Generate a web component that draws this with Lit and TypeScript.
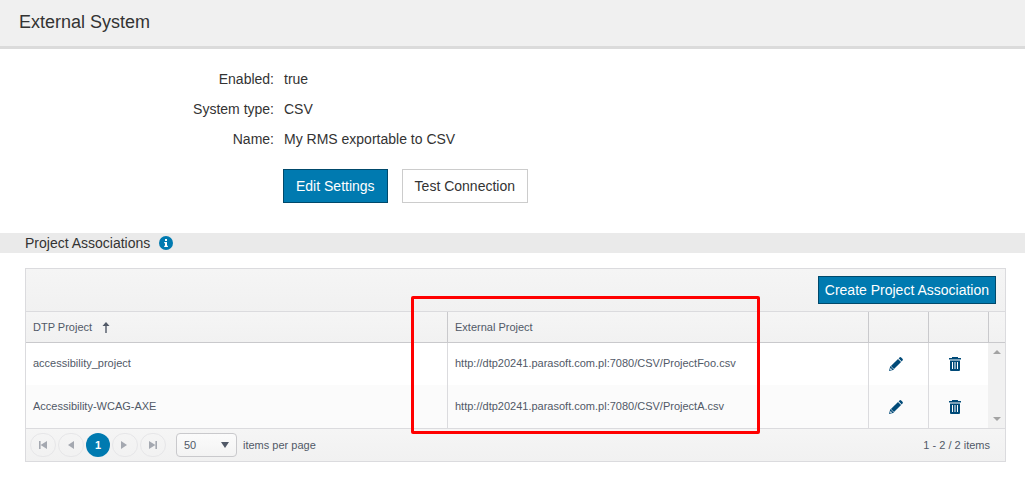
import { LitElement, html, css, svg } from "lit";
import { customElement, state } from "lit/decorators.js";

interface Association {
  project: string;
  external: string;
}

const icon = (cls: string, size: string, body: unknown) => html`
  <svg class=${cls} viewBox=${size} aria-hidden="true">${body}</svg>
`;

const pencil = () => icon("pencil", "0 0 14 14", svg`
  <path d="M9 1.9 12.1 5 5 12.1 1.9 9Z"/>
  <path d="M9.6 1.3 10.5.5Q11.4-.3 12.2.5L13.5 1.8Q14.3 2.6 13.5 3.4L12.7 4.4Z"/>
  <path fill-rule="evenodd" d="M1.3 9 5 12.7 0 14ZM1.6 10.9 1.1 12.5 1.6 12.9 3.1 12.5Z"/>
`);

const trash = () => icon("trash", "0 0 12 14", svg`
  <path d="M3 0H9V1H12V2.4H0V1H3Z"/>
  <path fill-rule="evenodd" d="M1 3.4H11V13Q11 14 10 14H2Q1 14 1 13ZM3 5V12H4V5ZM5.5 5V12H6.5V5ZM8 5V12H9V5Z"/>
`);

const info = () => icon("info", "0 0 14 14", svg`
  <circle cx="7" cy="7" r="7" fill="#007ab0"/>
  <path fill="#fff" d="M6 3H8V5H6ZM5.2 6H8V9.8H8.9V11H5.2V9.8H6V7.2H5.2Z"/>
`);

const arrowUp = () => icon("sort", "0 0 8 11", svg`
  <path d="M4 0 7.5 4H4.7V11H3.3V4H.5Z"/>
`);

const pagerGlyphs: Record<string, string> = {
  first: "M0 0H1.6V8H0ZM8 0V8L1.6 4Z",
  previous: "M7 0V8L1 4Z",
  next: "M0 0V8L6 4Z",
  last: "M8 0H6.4V8H8ZM0 0V8L6.4 4Z",
};

@customElement("app-root")
export class AppRoot extends LitElement {
  @state() private rows: Association[] = [
    { project: "accessibility_project", external: "http://dtp20241.parasoft.com.pl:7080/CSV/ProjectFoo.csv" },
    { project: "Accessibility-WCAG-AXE", external: "http://dtp20241.parasoft.com.pl:7080/CSV/ProjectA.csv" },
  ];

  static styles = css`
    :host {
      display: block;
      font: 14px/20px "Liberation Sans", Arial, sans-serif;
      color: #333;
      background: #fff;
    }
    * { box-sizing: border-box; }
    button, select { font: inherit; cursor: pointer; }
    svg { display: block; fill: currentColor; }
    .page-head {
      padding: 10px 19px 12px;
      background: #f0f0f0;
      border-bottom: 3px solid #dbdbdb;
    }
    .page-head h1 { margin: 0; font-size: 18px; line-height: 24px; font-weight: 400; }
    .details { margin: 0; padding-top: 15px; }
    .field {
      display: grid;
      grid-template-columns: 274px 1fr;
      column-gap: 10px;
      line-height: 30px;
    }
    .field dt { text-align: right; }
    .field dd { margin: 0; }
    .actions { display: flex; gap: 14px; padding: 15px 0 30px 283px; }
    .btn {
      height: 34px;
      padding: 0 12px;
      border: 1px solid #ccc;
      background: #fff;
      color: #333;
    }
    .btn.primary { background: #007ab0; border-color: #00496b; color: #fff; }
    .btn.small { height: 28px; padding: 0 6px; }
    .section-head {
      display: flex;
      align-items: center;
      gap: 9px;
      padding: 0 25px;
      background: #eaeaea;
    }
    .section-head h2 { margin: 0; font-size: 14px; font-weight: 400; }
    .info { width: 14px; height: 14px; }
    .grid {
      position: relative;
      margin: 15px 19px 0 25px;
      border: 1px solid #dbdbde;
      font-size: 11px;
      color: #515967;
    }
    .toolbar {
      display: flex;
      justify-content: flex-end;
      padding: 7px 9px;
      font-size: 14px;
      background: linear-gradient(#f5f5f5, #f1f1f1);
    }
    .content {
      display: grid;
      grid-template-columns: minmax(0, 1fr) 17px;
      border-block: 1px solid #dbdbde;
    }
    table { width: 100%; table-layout: fixed; border-collapse: separate; border-spacing: 0; }
    th, td { padding: 0 7px; text-align: left; font-weight: 400; }
    th + th { border-left: 1px solid #c9c9cc; }
    td + td { border-left: 1px solid #dbdbde; }
    th { height: 31px; background: linear-gradient(#f5f5f5, #f1f1f1); border-bottom: 1px solid #c9c9cc; }
    td { height: 42px; padding-bottom: 2px; }
    tr + tr td { height: 43px; }
    tbody tr:nth-child(even) { background: #fbfbfb; }
    .tool-col { width: 60px; }
    .sortable { display: flex; align-items: center; gap: 10px; }
    .sort { width: 8px; height: 11px; }
    .icon-btn { display: block; padding: 0; border: 0; background: none; color: #004a78; }
    .tool { padding: 0 20px; }
    .pencil { width: 14px; height: 14px; }
    .trash { width: 12px; height: 14px; }
    .side { display: flex; flex-direction: column; }
    .corner { height: 31px; background: linear-gradient(#f5f5f5, #f1f1f1); border: solid #c9c9cc; border-width: 0 0 1px 1px; }
    .scroll {
      flex: 1;
      display: flex;
      flex-direction: column;
      align-items: center;
      justify-content: space-between;
      padding: 7px 0;
      background: #f1f1f1;
      color: #a3a3a3;
    }
    .scroll svg { width: 8px; height: 4px; }
    .pager {
      display: flex;
      align-items: center;
      padding: 4px 15px 4px 4px;
      background: linear-gradient(#f5f5f5, #f1f1f1);
    }
    .pages { display: flex; gap: 2px; }
    .page {
      display: grid;
      place-items: center;
      width: 26px;
      height: 24px;
      padding: 0;
      border: 1px solid #e6e6e8;
      border-radius: 12px;
      background: none;
      color: #a4a8b0;
    }
    .page svg { width: 8px; height: 8px; }
    .page.current { width: 24px; border: 0; background: #007ab0; color: #fff; font-weight: 700; }
    .size { display: flex; align-items: center; gap: 6px; margin-left: 10px; }
    .select { display: grid; align-items: center; }
    .select > * { grid-area: 1 / 1; }
    select {
      appearance: none;
      width: 61px;
      height: 24px;
      padding: 0 7px;
      border: 1px solid #c9c9cc;
      border-radius: 4px;
      background: linear-gradient(#fbfbfb, #f3f3f3);
      color: #515967;
    }
    .caret { width: 8px; height: 6px; justify-self: end; margin-right: 8px; pointer-events: none; }
    .count { margin-left: auto; }
    .callout {
      position: absolute;
      left: 385px;
      top: 27px;
      width: 349px;
      height: 138px;
      border: 3px solid #f00;
      border-radius: 2px;
      pointer-events: none;
    }
  `;

  private field(label: string, value: string) {
    return html`<div class="field"><dt>${label}:</dt><dd>${value}</dd></div>`;
  }

  private pageButton(name: string) {
    return html`
      <button class="page" aria-label="${name} page">
        <svg viewBox="0 0 8 8" aria-hidden="true"><path d=${pagerGlyphs[name]}></path></svg>
      </button>
    `;
  }

  render() {
    return html`
      <header class="page-head"><h1>External System</h1></header>
      <main>
        <dl class="details">
          ${this.field("Enabled", "true")}
          ${this.field("System type", "CSV")}
          ${this.field("Name", "My RMS exportable to CSV")}
        </dl>
        <div class="actions">
          <button class="btn primary">Edit Settings</button>
          <button class="btn">Test Connection</button>
        </div>
        <div class="section-head"><h2>Project Associations</h2>${info()}</div>
        <div class="grid">
          <div class="toolbar"><button class="btn primary small">Create Project Association</button></div>
          <div class="content">
            <table>
              <colgroup><col><col><col class="tool-col"><col class="tool-col"></colgroup>
              <thead>
                <tr>
                  <th><div class="sortable">DTP Project ${arrowUp()}</div></th>
                  <th>External Project</th>
                  <th></th>
                  <th></th>
                </tr>
              </thead>
              <tbody>
                ${this.rows.map((row) => html`
                  <tr>
                    <td>${row.project}</td>
                    <td>${row.external}</td>
                    <td class="tool"><button class="icon-btn" aria-label="Edit">${pencil()}</button></td>
                    <td class="tool"><button class="icon-btn" aria-label="Delete">${trash()}</button></td>
                  </tr>
                `)}
              </tbody>
            </table>
            <div class="side" aria-hidden="true">
              <div class="corner"></div>
              <div class="scroll">
                <svg viewBox="0 0 8 4"><path d="M4 0 8 4H0Z"></path></svg>
                <svg viewBox="0 0 8 4"><path d="M4 4 8 0H0Z"></path></svg>
              </div>
            </div>
          </div>
          <div class="pager">
            <nav class="pages">
              ${this.pageButton("first")}
              ${this.pageButton("previous")}
              <button class="page current">1</button>
              ${this.pageButton("next")}
              ${this.pageButton("last")}
            </nav>
            <div class="size">
              <div class="select">
                <select id="page-size"><option>50</option></select>
                <svg class="caret" viewBox="0 0 8 6" aria-hidden="true"><path d="M0 0H8L4 6Z"></path></svg>
              </div>
              <label for="page-size">items per page</label>
            </div>
            <span class="count">1 - 2 / 2 items</span>
          </div>
          <div class="callout"></div>
        </div>
      </main>
    `;
  }
}
